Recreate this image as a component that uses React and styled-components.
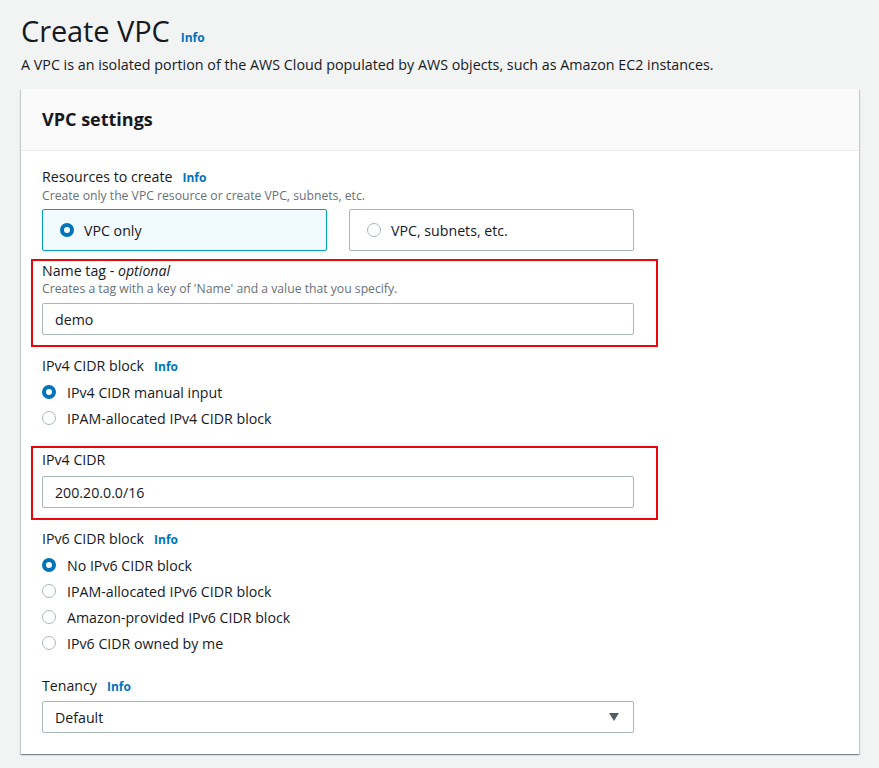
import React from "react";
import styled, { createGlobalStyle } from "styled-components";

const Global = createGlobalStyle`
  html, body { margin: 0; padding: 0; background: #f2f3f3; }
  body { font-family: "Open Sans", "Noto Sans", sans-serif; color: #16191f; }
  * { box-sizing: border-box; }
`;

const Page = styled.div`
  padding: 8px 20px 0 21px;
  width: 879px;
  height: 768px;
  overflow: hidden;
`;

const TitleRow = styled.div`
  display: flex;
  align-items: baseline;
  gap: 11px;
  height: 46px;
`;

const Title = styled.h1`
  margin: 0;
  font-size: 29px;
  font-weight: 400;
  line-height: 45px;
  letter-spacing: -0.1px;
`;

const Info = styled.span`
  color: #0073bb;
  font-weight: 700;
  font-size: 12px;
  margin-left: ${(p) => p.$gap || 0}px;
`;

const Lead = styled.p`
  margin: 0;
  font-size: 14.3px;
  line-height: 22px;
  height: 35px;
`;

const Panel = styled.section`
  width: 838px;
  background: #fff;
  box-shadow: 0 1px 1px 0 rgba(0, 28, 36, 0.3), 1px 1px 1px 0 rgba(0, 28, 36, 0.15),
    -1px 1px 1px 0 rgba(0, 28, 36, 0.15);
`;

const PanelHeader = styled.header`
  height: 62px;
  background: #fafafa;
  border-bottom: 1px solid #eaeded;
  display: flex;
  align-items: center;
  padding: 0 21px 2px;
`;

const PanelTitle = styled.h2`
  margin: 0;
  font-size: 18px;
  font-weight: 700;
`;

const Body = styled.div`
  padding: 16px 21px 21px;
  display: flex;
  flex-direction: column;
`;

const Label = styled.div`
  font-size: 14.2px;
  line-height: 20px;
  display: flex;
  align-items: baseline;
  margin-top: ${(p) => p.$mt || 0}px;
  em { font-style: italic; }
`;

const Desc = styled.div`
  font-size: 12.2px;
  line-height: 16px;
  color: #687078;
`;

const Tiles = styled.div`
  display: grid;
  grid-template-columns: 285px 285px;
  gap: 22px;
  margin-top: 5px;
`;

const Tile = styled.div`
  height: 42px;
  border: 1px solid ${(p) => (p.$on ? "#00a1c9" : "#aab7b8")};
  background: ${(p) => (p.$on ? "#f1faff" : "#fff")};
  border-radius: 2px;
  display: flex;
  align-items: center;
  padding-left: 17px;
  gap: 10px;
  font-size: 14.2px;
`;

const Radio = styled.span`
  width: 14px;
  height: 14px;
  border-radius: 50%;
  flex: none;
  border: ${(p) => (p.$on ? "4px solid #0073bb" : "1px solid #aab7b8")};
  background: #fff;
`;

const Highlight = styled.div`
  margin: ${(p) => p.$mt}px -11px 0;
  width: 627px;
  border: 2px solid #e8070b;
  padding: ${(p) => p.$pt || 0}px 22px 10px 9px;
`;

const Input = styled.div`
  margin-top: ${(p) => p.$mt ?? 6}px;
  width: 592px;
  height: 32px;
  border: 1px solid #aab7b8;
  border-radius: 2px;
  display: flex;
  align-items: center;
  padding: 0 12px;
  font-size: 14.2px;
  background: #fff;
  position: relative;
`;

const Caret = styled.span`
  position: absolute;
  right: 14px;
  top: 11px;
  width: 0;
  height: 0;
  border-left: 5.5px solid transparent;
  border-right: 5.5px solid transparent;
  border-top: 8px solid #545b64;
`;

const RadioList = styled.div`
  display: flex;
  flex-direction: column;
  margin-top: 2px;
`;

const RadioRow = styled.div`
  height: 26px;
  display: flex;
  align-items: center;
  gap: 11px;
  font-size: 14.2px;
`;

function Opt({ on, children }) {
  return (
    <RadioRow>
      <Radio $on={on} />
      {children}
    </RadioRow>
  );
}

export default function App() {
  return (
    <Page>
      <Global />
      <TitleRow>
        <Title>Create VPC</Title>
        <Info>Info</Info>
      </TitleRow>
      <Lead>
        A VPC is an isolated portion of the AWS Cloud populated by AWS objects, such as Amazon EC2 instances.
      </Lead>
      <Panel>
        <PanelHeader>
          <PanelTitle>VPC settings</PanelTitle>
        </PanelHeader>
        <Body>
          <Label>
            Resources to create<Info $gap={10}>Info</Info>
          </Label>
          <Desc>Create only the VPC resource or create VPC, subnets, etc.</Desc>
          <Tiles>
            <Tile $on>
              <Radio $on />
              VPC only
            </Tile>
            <Tile>
              <Radio />
              VPC, subnets, etc.
            </Tile>
          </Tiles>

          <Highlight $mt={8}>
            <Label>
              Name tag -&nbsp;<em>optional</em>
            </Label>
            <Desc>Creates a tag with a key of 'Name' and a value that you specify.</Desc>
            <Input>demo</Input>
          </Highlight>

          <Label $mt={9}>
            IPv4 CIDR block<Info $gap={10}>Info</Info>
          </Label>
          <RadioList>
            <Opt on>IPv4 CIDR manual input</Opt>
            <Opt>IPAM-allocated IPv4 CIDR block</Opt>
          </RadioList>

          <Highlight $mt={15} $pt={2}>
            <Label>IPv4 CIDR</Label>
            <Input>200.20.0.0/16</Input>
          </Highlight>

          <Label $mt={9}>
            IPv6 CIDR block<Info $gap={10}>Info</Info>
          </Label>
          <RadioList>
            <Opt on>No IPv6 CIDR block</Opt>
            <Opt>IPAM-allocated IPv6 CIDR block</Opt>
            <Opt>Amazon-provided IPv6 CIDR block</Opt>
            <Opt>IPv6 CIDR owned by me</Opt>
          </RadioList>

          <Label $mt={20}>
            Tenancy<Info $gap={10}>Info</Info>
          </Label>
          <Input $mt={4}>
            Default
            <Caret />
          </Input>
        </Body>
      </Panel>
    </Page>
  );
}
